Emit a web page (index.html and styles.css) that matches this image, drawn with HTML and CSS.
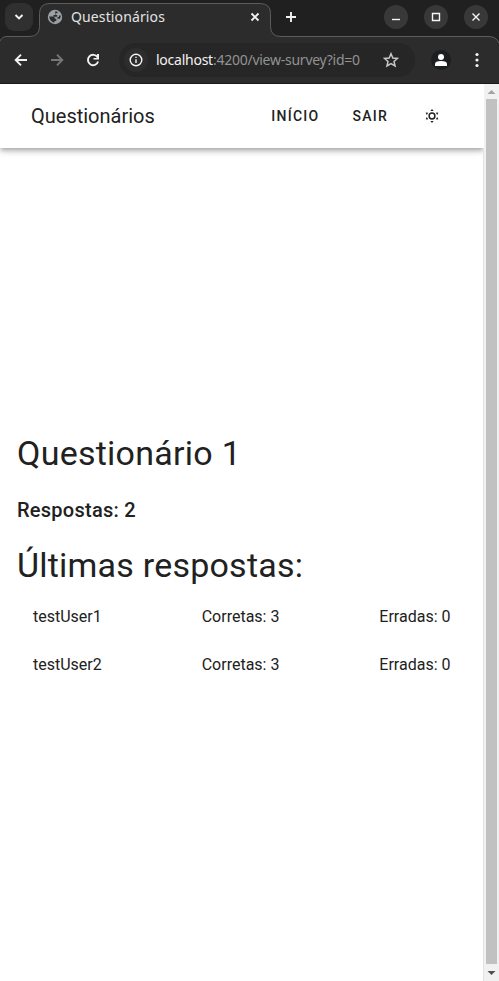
FILE: index.html
```html
<!DOCTYPE html>
<html lang="pt">
<head>
<meta charset="utf-8">
<title>Questionários</title>
<link rel="stylesheet" href="styles.css">
</head>
<body>
<div class="browser">
  <svg class="frame" width="499" height="83" viewBox="0 0 499 83">
    <path class="frame-fill" d="M0 83V41Q2 36.500 7 36.500H29Q39.500 36.500 39.500 26.500V13.500Q39.500 3.500 50 3.500H260Q270.500 3.500 270.500 13.500V26.500Q270.500 36.500 281 36.500H489Q496 36.500 499 43V83Z"/>
    <path class="frame-line" d="M0 41Q2 36.500 7 36.500H29Q39.500 36.500 39.500 26.500V13.500Q39.500 3.500 50 3.500H260Q270.500 3.500 270.500 13.500V26.500Q270.500 36.500 281 36.500H489Q496 36.500 499 43"/>
  </svg>
  <div class="tabs">
    <span class="tab-search"><svg width="28" height="28" viewBox="0 0 28 28"><path class="stroke" d="M10.500 12L14 15.500L17.500 12"/></svg></span>
    <div class="tab">
      <svg width="16" height="16" viewBox="0 0 16 16"><circle cx="8" cy="8" r="7.200" fill="#9aa0a6"/><path fill="#2c2c2c" d="M2.200 7.500H5.500Q8 7.500 8 9.800H9.300V12H7.500V13.700Q3 13 2.200 7.500ZM8.300 2.200L10.500 2.700V4.200H8.500V6H6.500V7.700H10.500V9.800H12.700Q14 8.500 13.700 6.500H12V8H10.200V6H8Z"/></svg>
      <span class="tab-title">Questionários</span>
      <svg width="10" height="10" viewBox="0 0 10 10"><path class="stroke" d="M1.500 1.500L8.500 8.500M8.500 1.500L1.500 8.500"/></svg>
    </div>
    <svg class="plus" width="12" height="12" viewBox="0 0 12 12"><path class="stroke" d="M6 1V11M1 6H11"/></svg>
    <div class="window-buttons">
      <span><svg width="24" height="24" viewBox="0 0 24 24"><path class="thin" d="M8 14.500H16"/></svg></span>
      <span><svg width="24" height="24" viewBox="0 0 24 24"><path class="thin" d="M8.500 8.500H15.500V15.500H8.500Z"/></svg></span>
      <span><svg width="24" height="24" viewBox="0 0 24 24"><path class="thin" d="M8.500 8.500L15.500 15.500M15.500 8.500L8.500 15.500"/></svg></span>
    </div>
  </div>
  <div class="toolbar">
    <svg width="14" height="14" viewBox="0 0 14 14"><path class="stroke" d="M13 7H2M7 1.700L1.700 7L7 12.300"/></svg>
    <svg width="14" height="14" viewBox="0 0 14 14"><path class="stroke dim" d="M1 7H12M7 1.700L12.300 7L7 12.300"/></svg>
    <svg width="14" height="14" viewBox="0 0 14 14"><path class="stroke" d="M11.500 4.200A5.200 5.200 0 1 0 12.100 8.500"/><path fill="#f2f2f2" d="M13 1V6.500H7.500V5H11V1Z"/></svg>
    <div class="address">
      <span class="info"><svg width="14" height="14" viewBox="0 0 14 14"><circle class="thin" cx="7" cy="7" r="5.800"/><path class="thin" d="M7 6.200V10M7 3.800V5"/></svg></span>
      <span class="url"><b>localhost</b>:4200/view-survey?id=0</span>
      <svg class="star" width="16" height="16" viewBox="0 0 16 16"><path d="M8 1.700L9.850 6L14.500 6.400L11 9.450L12.050 14L8 11.600L3.950 14L5 9.450L1.500 6.400L6.150 6Z"/></svg>
    </div>
    <span class="avatar"><svg width="20" height="20" viewBox="0 0 20 20"><circle cx="10" cy="7" r="3"/><path d="M4 16V14Q4 11 10 11T16 14V16Z"/></svg></span>
    <svg class="dots" width="4" height="16" viewBox="0 0 4 16"><circle cx="2" cy="2.500" r="1.600"/><circle cx="2" cy="8" r="1.600"/><circle cx="2" cy="13.500" r="1.600"/></svg>
  </div>
</div>
<div class="viewport">
  <div class="page">
    <header class="app-bar">
      <span class="brand">Questionários</span>
      <nav>
        <a class="home">Início</a>
        <a class="logout">Sair</a>
        <svg width="16" height="16" viewBox="0 0 16 16"><circle cx="8" cy="8" r="2.900" fill="none" stroke="#222" stroke-width="1.500"/><path fill="#222" d="M8 1L9.600 3H6.400ZM8 15L6.400 13H9.600ZM1.700 4.400L4.300 4.700L2.700 6.900ZM14.300 4.400L13.300 6.900L11.700 4.700ZM1.700 11.600L2.700 9.100L4.300 11.300ZM14.300 11.600L11.700 11.300L13.300 9.100Z"/></svg>
      </nav>
    </header>
    <main>
      <h1>Questionário 1</h1>
      <h2>Respostas: 2</h2>
      <h1 class="latest">Últimas respostas:</h1>
      <div class="row"><span>testUser1</span><span>Corretas: 3</span><span>Erradas: 0</span></div>
      <div class="row"><span>testUser2</span><span>Corretas: 3</span><span>Erradas: 0</span></div>
    </main>
  </div>
  <div class="scrollbar">
    <svg width="15" height="15" viewBox="0 0 15 15"><path fill="#a3a3a3" d="M3.500 10L7.500 6L11.500 10Z"/></svg>
    <div class="thumb"></div>
    <svg width="15" height="17" viewBox="0 0 15 17"><path fill="#505050" d="M3.500 7L7.500 11L11.500 7Z"/></svg>
  </div>
</div>
</body>
</html>
```

FILE: styles.css
```css
* { box-sizing: border-box; }
body { margin: 0; width: 499px; height: 981px; overflow: hidden; background: #fff; color: #212121; font-family: Roboto, sans-serif; }
svg { display: block; flex: none; }
.browser { position: relative; height: 84px; background: #202020; border-bottom: 1px solid #191919; font-family: "Noto Sans", sans-serif; color: #e3e3e3; }
.frame { position: absolute; left: 0; top: 0; }
.frame-fill { fill: #2c2c2c; }
.frame-line { fill: none; stroke: #5c5c5c; }
.stroke { fill: none; stroke: #f2f2f2; stroke-width: 1.9; }
.dim { stroke: #777; }
.thin { fill: none; stroke: #f5f5f5; stroke-width: 1.4; }
.tabs { position: relative; display: flex; height: 37px; align-items: center; padding: 0 11px 3px 5px; }
.tab-search { width: 28px; height: 28px; border-radius: 9px; background: #303030; }
.tab { display: flex; align-items: center; width: 232px; margin-left: 6px; padding: 0 11px 0 8px; }
.tab-title { flex: 1; margin-left: 8px; font-size: 14px; line-height: 20px; letter-spacing: .12px; white-space: nowrap; }
.plus { margin-left: 14px; }
.window-buttons { display: flex; gap: 16px; margin-left: auto; }
.window-buttons span { width: 24px; height: 24px; border-radius: 50%; background: #383838; }
.toolbar { position: relative; display: flex; align-items: center; height: 46px; padding: 0 20px 0 14px; }
.toolbar > svg + svg { margin-left: 22px; }
.address { display: flex; align-items: center; width: 296px; height: 34px; margin-left: 19px; padding: 0 16px 0 5px; border-radius: 17px; background: #262626; }
.info { display: flex; align-items: center; justify-content: center; width: 24px; height: 24px; border-radius: 50%; background: #2d2d2d; }
.url { flex: 1; margin-left: 8px; color: #929292; font-size: 14px; line-height: 20px; letter-spacing: -.25px; white-space: nowrap; }
.url b { color: #f2f2f2; font-weight: 400; }
.star { fill: none; stroke: #c7c7c7; stroke-width: 1.5; }
.avatar { width: 20px; height: 20px; margin-left: 16px; border-radius: 50%; background: #1c1f20; fill: #fff; }
.dots { margin-left: auto; fill: #f5f5f5; }
.viewport { display: flex; height: 897px; }
.page { display: flex; flex-direction: column; width: 484px; overflow: hidden; }
.app-bar { display: flex; flex: none; align-items: center; justify-content: space-between; height: 64px; padding: 0 44px 0 31px; box-shadow: 0 2px 4px -1px rgba(0,0,0,.2), 0 4px 5px rgba(0,0,0,.14), 0 1px 10px rgba(0,0,0,.12); }
.brand { font-size: 20px; line-height: 30px; }
nav { display: flex; align-items: center; font-size: 14px; font-weight: 500; letter-spacing: 1.25px; text-transform: uppercase; }
.logout { margin-left: 33px; }
nav svg { margin-left: 36px; }
main { flex: 1; padding: 285px 16px 0 17px; border-right: 1px solid #e3e3e3; }
h1 { margin: 0; font-size: 34px; font-weight: 400; line-height: 40px; letter-spacing: .25px; }
h2 { margin: 21px 0 19px; font-size: 20px; font-weight: 500; line-height: 32px; letter-spacing: .25px; }
.latest { margin-bottom: 7px; letter-spacing: .22px; }
.row { display: flex; align-items: center; justify-content: space-between; height: 48px; padding: 0 16.500px 0 16px; font-size: 16px; }
.scrollbar { display: flex; flex-direction: column; width: 15px; background: #f1f1f1; }
.thumb { flex: 1; width: 11px; margin-left: 2px; background: #c1c1c1; }
```
